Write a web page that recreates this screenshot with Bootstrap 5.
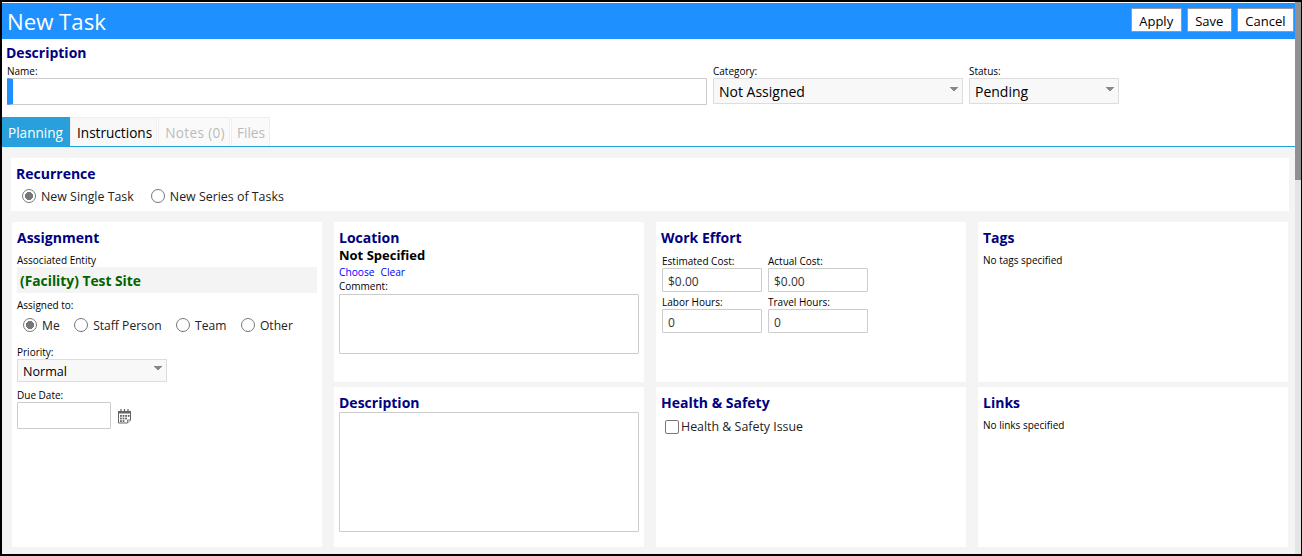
<!DOCTYPE html>
<html lang="en">
<head>
<meta charset="utf-8">
<title>New Task</title>
<link rel="stylesheet" href="https://cdn.jsdelivr.net/npm/bootstrap@5.3.0/dist/css/bootstrap.min.css">
<style>
html,body{height:100%;margin:0;overflow:hidden;background:#000}
body{font-family:"Open Sans","Liberation Sans",sans-serif;color:#000;font-size:12px}
.frame{height:556px;border:solid #000;border-width:2px 1px 2px 2px;background:#fff;display:flex;overflow:hidden}
.main{flex:1 1 auto;min-width:0;display:flex;flex-direction:column}
.vbar{width:6px;background:#e4e4e4;flex:none;display:flex;flex-direction:column}
.vthumb{height:178px;background:#909090}
.topbar{height:36px;margin-top:1px;background:#1e90ff;padding:0 1px 0 5px;flex:none}
.ttl{color:#fff;font-size:22.2px;line-height:37px;margin:0;font-weight:400}
.act{background:#fff;border:1px solid #999;border-radius:1px;color:#000;font-size:13px;line-height:20px;height:24px;padding:1px 7.5px 0;margin-left:5px;margin-bottom:2px}
.hd{color:#000080;font-weight:700;font-size:14px;line-height:19px;margin:0}
.lbl{display:block;font-size:10px;line-height:13px;color:#000;margin:0}
.lbl-top{margin-top:3px}
.lbl-c{margin-bottom:1px}
.desc{height:78px;padding:4px 4px 0 4px;background:#fff;flex:none}
.fld{margin-left:6px}
.fld-name{margin-left:1px}
.name-in{width:700px;height:27px;border:1px solid #ccc;border-left:6px solid #1e90ff;border-radius:1px;padding:0}
.sel{height:26px;border:1px solid #ddd;border-radius:0;background-color:#f8f8f8;background-image:linear-gradient(45deg,transparent 50%,#888 50%),linear-gradient(-45deg,transparent 50%,#888 50%);background-size:4px 4px,4px 4px;background-position:right 8px top 8px,right 4px top 8px;background-repeat:no-repeat;color:#000;font-size:14px;line-height:22px;padding:2px 5px 0;box-shadow:none}
.w-cat{width:250px}.w-st{width:150px}.w-pr{width:150px;height:23px;font-size:12.6px;line-height:19px;background-position:right 8px top 6px,right 4px top 6px}
.tabbar{height:30px;border-bottom:1px solid #1fa2e2;margin:0;flex:none;flex-wrap:nowrap}
.tabx{font-size:13.6px;line-height:29px;height:29px;padding:0 4px 0 6px;border:1px solid #eee;border-bottom:0;background:#f8f8f8;color:#000;text-decoration:none;display:block}
.tabx.on{background:#29a0dc;border-color:#29a0dc;color:#fff;padding:0 6px 0 5px}
.tabx.off{color:#bbb;background:#fafafa;margin-left:1px}
.tab-notes{letter-spacing:.35px}
.tab-files{padding-left:5px!important}
.content{flex:1 1 auto;background:#f4f4f4;padding:11px 6px 0 9px}
.rec{height:53px;background:#fff;padding:6px 5px}
.grid{display:grid;grid-template-columns:repeat(4,310px);grid-template-rows:160px 160px;gap:5px 12px;margin-top:11px;margin-left:1px}
.pane{background:#fff;padding:6px 5px}
.tall{grid-row:span 2}
.rad{display:inline-flex;align-items:center;font-size:12.4px;line-height:16px;margin:0;color:#222}
.rad input{margin:0 5px 2px 0;width:14px;height:14px;border:1px solid #777;background-color:#fff;box-shadow:none;flex:none}
.rad input:checked{background-color:#fff;border-color:#777;background-image:radial-gradient(circle,#777 0,#777 3.8px,transparent 4.2px)}
.rad input[type=checkbox]{border-radius:2px;margin:0 2px 0 0}
.radrow{padding-left:6px;margin-top:6px;display:flex}
.gap-rec{gap:17px}
.gap-asg{gap:14.5px}
.gap-asg .rad{font-size:12.1px}
.lbl-ent{margin-top:7px}
.lbl-asg{margin-top:6px}
.lbl-pri{margin-top:12px}
.lbl-due{margin-top:7px}
.ent{background:#f4f4f4;height:26px;line-height:27px;color:#006400;font-weight:700;font-size:13.8px;padding-left:3px}
.tb{border:1px solid #ccc;border-radius:1px;background:#fff;padding:2px 5px 0;font-size:12px;color:#333;box-shadow:none;height:24px}
.w-date{width:94px;height:27px}
.w-num{width:100px}
.ta{display:block;width:300px;resize:none;padding:0}
.ta-c{height:60px}.ta-d{height:120px}
.nots{font-size:13px;font-weight:700;line-height:17px;color:#000;margin:0 0 1px}
.lnks{gap:6px}
.lnk{font-size:10.2px;line-height:14px;color:#00f;text-decoration:none}
.lnks+.lbl{margin-top:1px}
.note{font-size:10px;line-height:13px;margin-top:7px;color:#000}
.numgrid{display:grid;grid-template-columns:100px 100px;gap:4px 6px;margin:8px 0 0 1px}
.hs{padding-left:4px;margin-top:7px}
.datewrap{gap:6px}
</style>
</head>
<body>
<div class="frame">
  <div class="main">
    <div class="topbar d-flex justify-content-between align-items-center">
      <h1 class="ttl">New Task</h1>
      <div class="d-flex">
        <button type="button" class="act">Apply</button>
        <button type="button" class="act">Save</button>
        <button type="button" class="act">Cancel</button>
      </div>
    </div>
    <div class="desc">
      <h2 class="hd">Description</h2>
      <div class="d-flex">
        <div class="fld-name">
          <label class="lbl lbl-top" for="nm">Name:</label>
          <input id="nm" class="form-control name-in" type="text">
        </div>
        <div class="fld">
          <label class="lbl lbl-top" for="ct">Category:</label>
          <select id="ct" class="form-select sel w-cat"><option>Not Assigned</option></select>
        </div>
        <div class="fld">
          <label class="lbl lbl-top" for="st">Status:</label>
          <select id="st" class="form-select sel w-st"><option>Pending</option></select>
        </div>
      </div>
    </div>
    <nav class="tabbar d-flex">
      <a class="tabx on" href="#">Planning</a>
      <a class="tabx" href="#">Instructions</a>
      <a class="tabx off tab-notes" href="#">Notes (0)</a>
      <a class="tabx off tab-files" href="#">Files</a>
    </nav>
    <div class="content">
      <section class="rec">
        <h2 class="hd">Recurrence</h2>
        <div class="radrow gap-rec">
          <label class="rad"><input class="form-check-input" type="radio" name="r" checked>New Single Task</label>
          <label class="rad"><input class="form-check-input" type="radio" name="r">New Series of Tasks</label>
        </div>
      </section>
      <div class="grid">
        <section class="pane tall">
          <h2 class="hd">Assignment</h2>
          <div class="lbl lbl-ent">Associated Entity</div>
          <div class="ent">(Facility) Test Site</div>
          <div class="lbl lbl-asg">Assigned to:</div>
          <div class="radrow gap-asg">
            <label class="rad"><input class="form-check-input" type="radio" name="a" checked>Me</label>
            <label class="rad"><input class="form-check-input" type="radio" name="a">Staff Person</label>
            <label class="rad"><input class="form-check-input" type="radio" name="a">Team</label>
            <label class="rad"><input class="form-check-input" type="radio" name="a">Other</label>
          </div>
          <label class="lbl lbl-pri" for="pr">Priority:</label>
          <select id="pr" class="form-select sel w-pr"><option>Normal</option></select>
          <label class="lbl lbl-due" for="dd">Due Date:</label>
          <div class="d-flex align-items-center datewrap">
            <input id="dd" class="form-control tb w-date" type="text">
            <svg width="15" height="16" viewBox="0 0 15 16" aria-hidden="true"><path d="M1.5 3.500h12v8.500l-3 3h-9z" fill="#fff" stroke="#666"/><path d="M10.500 15v-3h3" fill="#ddd" stroke="#666" stroke-width=".8"/><rect x="1" y="3" width="13" height="2.500" fill="#666"/><path d="M4 1v3M7.500 1v3M11 1v3" stroke="#666" stroke-width="1.200"/><g fill="#666"><rect x="3" y="7" width="1.800" height="1.800"/><rect x="5.600" y="7" width="1.800" height="1.800"/><rect x="8.200" y="7" width="1.800" height="1.800"/><rect x="10.800" y="7" width="1.800" height="1.800"/><rect x="3" y="9.600" width="1.800" height="1.800"/><rect x="5.600" y="9.600" width="1.800" height="1.800"/><rect x="8.200" y="9.600" width="1.800" height="1.800"/><rect x="3" y="12.200" width="1.800" height="1.800"/><rect x="5.600" y="12.200" width="1.800" height="1.800"/></g></svg>
          </div>
        </section>
        <section class="pane">
          <h2 class="hd">Location</h2>
          <p class="nots">Not Specified</p>
          <div class="d-flex lnks"><a class="lnk" href="#">Choose</a><a class="lnk" href="#">Clear</a></div>
          <label class="lbl lbl-c" for="cm">Comment:</label>
          <textarea id="cm" class="form-control tb ta ta-c"></textarea>
        </section>
        <section class="pane">
          <h2 class="hd">Work Effort</h2>
          <div class="numgrid">
            <div><label class="lbl">Estimated Cost:</label><input class="form-control tb w-num" value="$0.00"></div>
            <div><label class="lbl">Actual Cost:</label><input class="form-control tb w-num" value="$0.00"></div>
            <div><label class="lbl">Labor Hours:</label><input class="form-control tb w-num" value="0"></div>
            <div><label class="lbl">Travel Hours:</label><input class="form-control tb w-num" value="0"></div>
          </div>
        </section>
        <section class="pane">
          <h2 class="hd">Tags</h2>
          <div class="note">No tags specified</div>
        </section>
        <section class="pane">
          <h2 class="hd">Description</h2>
          <textarea class="form-control tb ta ta-d"></textarea>
        </section>
        <section class="pane">
          <h2 class="hd">Health &amp; Safety</h2>
          <div class="hs"><label class="rad"><input class="form-check-input" type="checkbox">Health &amp; Safety Issue</label></div>
        </section>
        <section class="pane">
          <h2 class="hd">Links</h2>
          <div class="note">No links specified</div>
        </section>
      </div>
    </div>
  </div>
  <div class="vbar"><div class="vthumb"></div></div>
</div>
<script src="https://cdn.jsdelivr.net/npm/bootstrap@5.3.0/dist/js/bootstrap.bundle.min.js"></script>
</body>
</html>
